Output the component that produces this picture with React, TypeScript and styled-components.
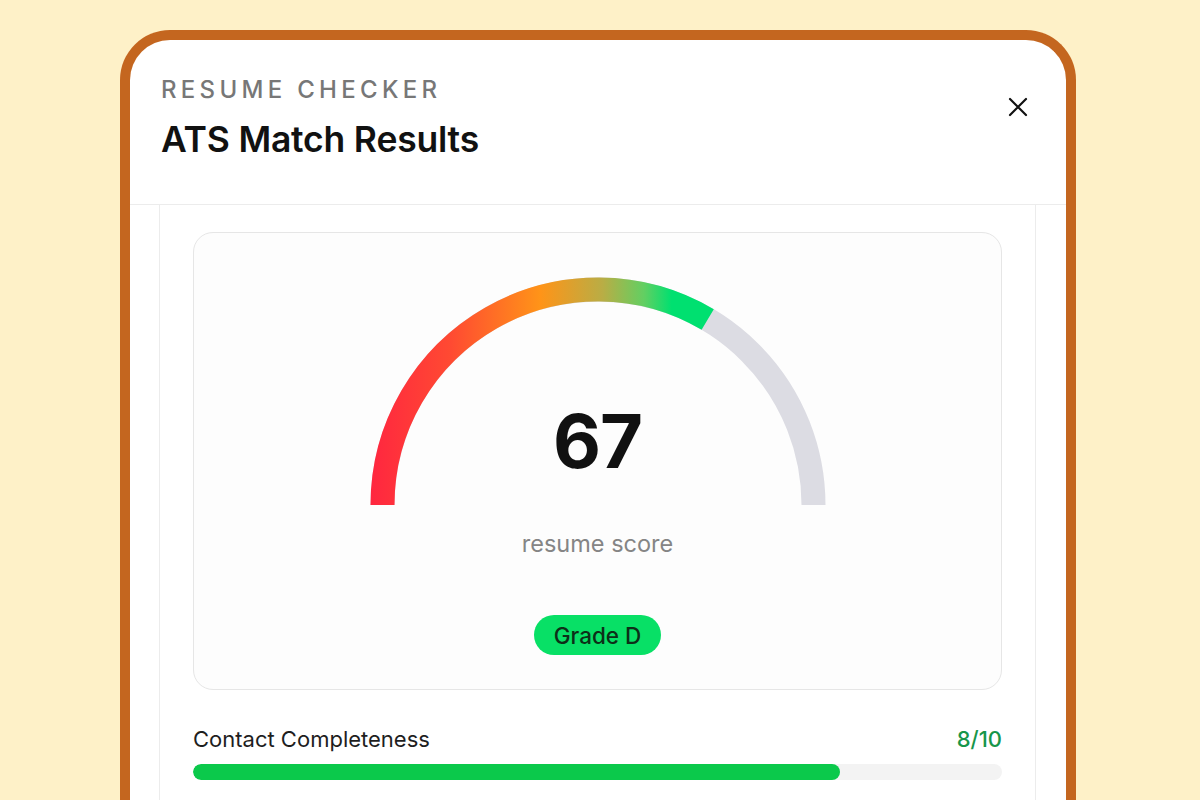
import styled, { createGlobalStyle } from "styled-components"

const GlobalStyle = createGlobalStyle`
    html, body {
        margin: 0;
        padding: 0;
        background: #fef1c8;
        font-family: Inter, "Noto Sans", sans-serif;
        overflow: hidden;
    }
`;

const Page = styled.div`
    width: 1200px;
    height: 800px;
    display: flex;
    padding: 30px 0 0 120px;
    box-sizing: border-box;
    overflow: hidden;
`;

const Modal = styled.div`
    width: 956px;
    height: 900px;
    box-sizing: border-box;
    border: 10px solid #c4661f;
    border-bottom: none;
    border-radius: 50px 50px 0 0;
    background: #fff;
    display: flex;
    flex-direction: column;
`;

const Header = styled.div`
    display: flex;
    justify-content: space-between;
    align-items: flex-start;
    padding: 35px 37px 0 31px;
    height: 165px;
    box-sizing: border-box;
    border-bottom: 1px solid #ececec;
`;

const Titles = styled.div`
    display: flex;
    flex-direction: column;
    gap: 15px;
`;

const Eyebrow = styled.div`
    font-size: 24px;
    line-height: 29px;
    font-weight: 500;
    letter-spacing: 4.3px;
    color: #777;
`;

const Title = styled.h1`
    margin: 0;
    font-size: 35.5px;
    line-height: 42px;
    font-weight: 600;
    color: #111;
    letter-spacing: -0.2px;
`;

const CloseBtn = styled.button`
    border: none;
    background: none;
    padding: 0;
    margin-top: 21px;
    cursor: pointer;
    display: flex;
`;

const Body = styled.div`
    flex: 1;
    padding: 0 30px 0 29px;
    display: flex;
`;

const Panel = styled.div`
    flex: 1;
    border-left: 1px solid #ececec;
    border-right: 1px solid #ececec;
    padding: 27px 33px 0 33px;
`;

const ScoreCard = styled.div`
    border: 1px solid #e6e6e6;
    border-radius: 20px;
    background: #fdfdfd;
    padding: 40px 0 34px 0;
    display: flex;
    flex-direction: column;
    align-items: center;
`;

const GaugeWrap = styled.div`
    position: relative;
    width: 460px;
    height: 232px;
`;

const ScoreValue = styled.div`
    position: absolute;
    left: 0;
    right: 0;
    top: 131px;
    text-align: center;
    font-size: 74px;
    line-height: 74px;
    font-weight: 700;
    color: #111;
    letter-spacing: -1px;
`;

const ScoreLabel = styled.div`
    margin-top: 24px;
    font-size: 23.5px;
    line-height: 30px;
    color: #858585;
`;

const GradePill = styled.div`
    margin-top: 56px;
    height: 40px;
    padding: 0 20px;
    border-radius: 20px;
    background: #08e066;
    color: #0d2f18;
    font-size: 22.5px;
    font-weight: 500;
    display: flex;
    align-items: center;
`;

const Metric = styled.div`
    margin-top: 35px;
    display: flex;
    flex-direction: column;
    gap: 11px;
`;

const MetricHead = styled.div`
    display: flex;
    justify-content: space-between;
    font-size: 22px;
    line-height: 28px;
    color: #1e1e1e;
`;

const MetricScore = styled.span<{ $color: string }>`
    color: ${p => p.$color};
    font-weight: 500;
`;

const Track = styled.div`
    height: 16px;
    border-radius: 8px;
    background: #f3f3f3;
    overflow: hidden;
`;

const Fill = styled.div<{ $color: string }>`
    height: 100%;
    border-radius: 8px;
    background: ${p => p.$color};
`;

const Gauge = ({ value }: { value: number }) => {
    const cx = 230
    const cy = 232
    const r = 215.5
    const a = Math.PI * (1 - value / 100)
    const ex = cx + r * Math.cos(a)
    const ey = cy - r * Math.sin(a)
    return (
        <svg width="460" height="232" viewBox="0 0 460 232">
            <defs>
                <linearGradient id="gaugeGrad" gradientUnits="userSpaceOnUse" x1="0" y1="0" x2="345" y2="0">
                    <stop offset="0" stopColor="#ff2540" />
                    <stop offset="0.24" stopColor="#ff4a32" />
                    <stop offset="0.5" stopColor="#ff9418" />
                    <stop offset="0.68" stopColor="#b9ad45" />
                    <stop offset="0.8" stopColor="#62cf62" />
                    <stop offset="0.88" stopColor="#00e070" />
                    <stop offset="1" stopColor="#00e070" />
                </linearGradient>
            </defs>
            <path d={`M ${cx - r} ${cy} A ${r} ${r} 0 0 1 ${cx + r} ${cy}`} fill="none" stroke="#dcdce3" strokeWidth="24" />
            <path d={`M ${cx - r} ${cy} A ${r} ${r} 0 0 1 ${ex} ${ey}`} fill="none" stroke="url(#gaugeGrad)" strokeWidth="24" />
        </svg>
    )
}

const App = () => {
    return (
        <Page>
            <GlobalStyle />
            <Modal>
                <Header>
                    <Titles>
                        <Eyebrow>RESUME CHECKER</Eyebrow>
                        <Title>ATS Match Results</Title>
                    </Titles>
                    <CloseBtn aria-label="Close">
                        <svg width="22" height="22" viewBox="0 0 22 22">
                            <path d="M3 3 L19 19 M19 3 L3 19" stroke="#111" strokeWidth="2.2" strokeLinecap="round" />
                        </svg>
                    </CloseBtn>
                </Header>
                <Body>
                    <Panel>
                        <ScoreCard>
                            <GaugeWrap>
                                <Gauge value={67} />
                                <ScoreValue>67</ScoreValue>
                            </GaugeWrap>
                            <ScoreLabel>resume score</ScoreLabel>
                            <GradePill>Grade D</GradePill>
                        </ScoreCard>
                        <Metric>
                            <MetricHead>
                                <span>Contact Completeness</span>
                                <MetricScore $color="#17964a">8/10</MetricScore>
                            </MetricHead>
                            <Track>
                                <Fill $color="#0bc94b" style={{ width: "80%" }} />
                            </Track>
                        </Metric>
                    </Panel>
                </Body>
            </Modal>
        </Page>
    )
}

export default App
